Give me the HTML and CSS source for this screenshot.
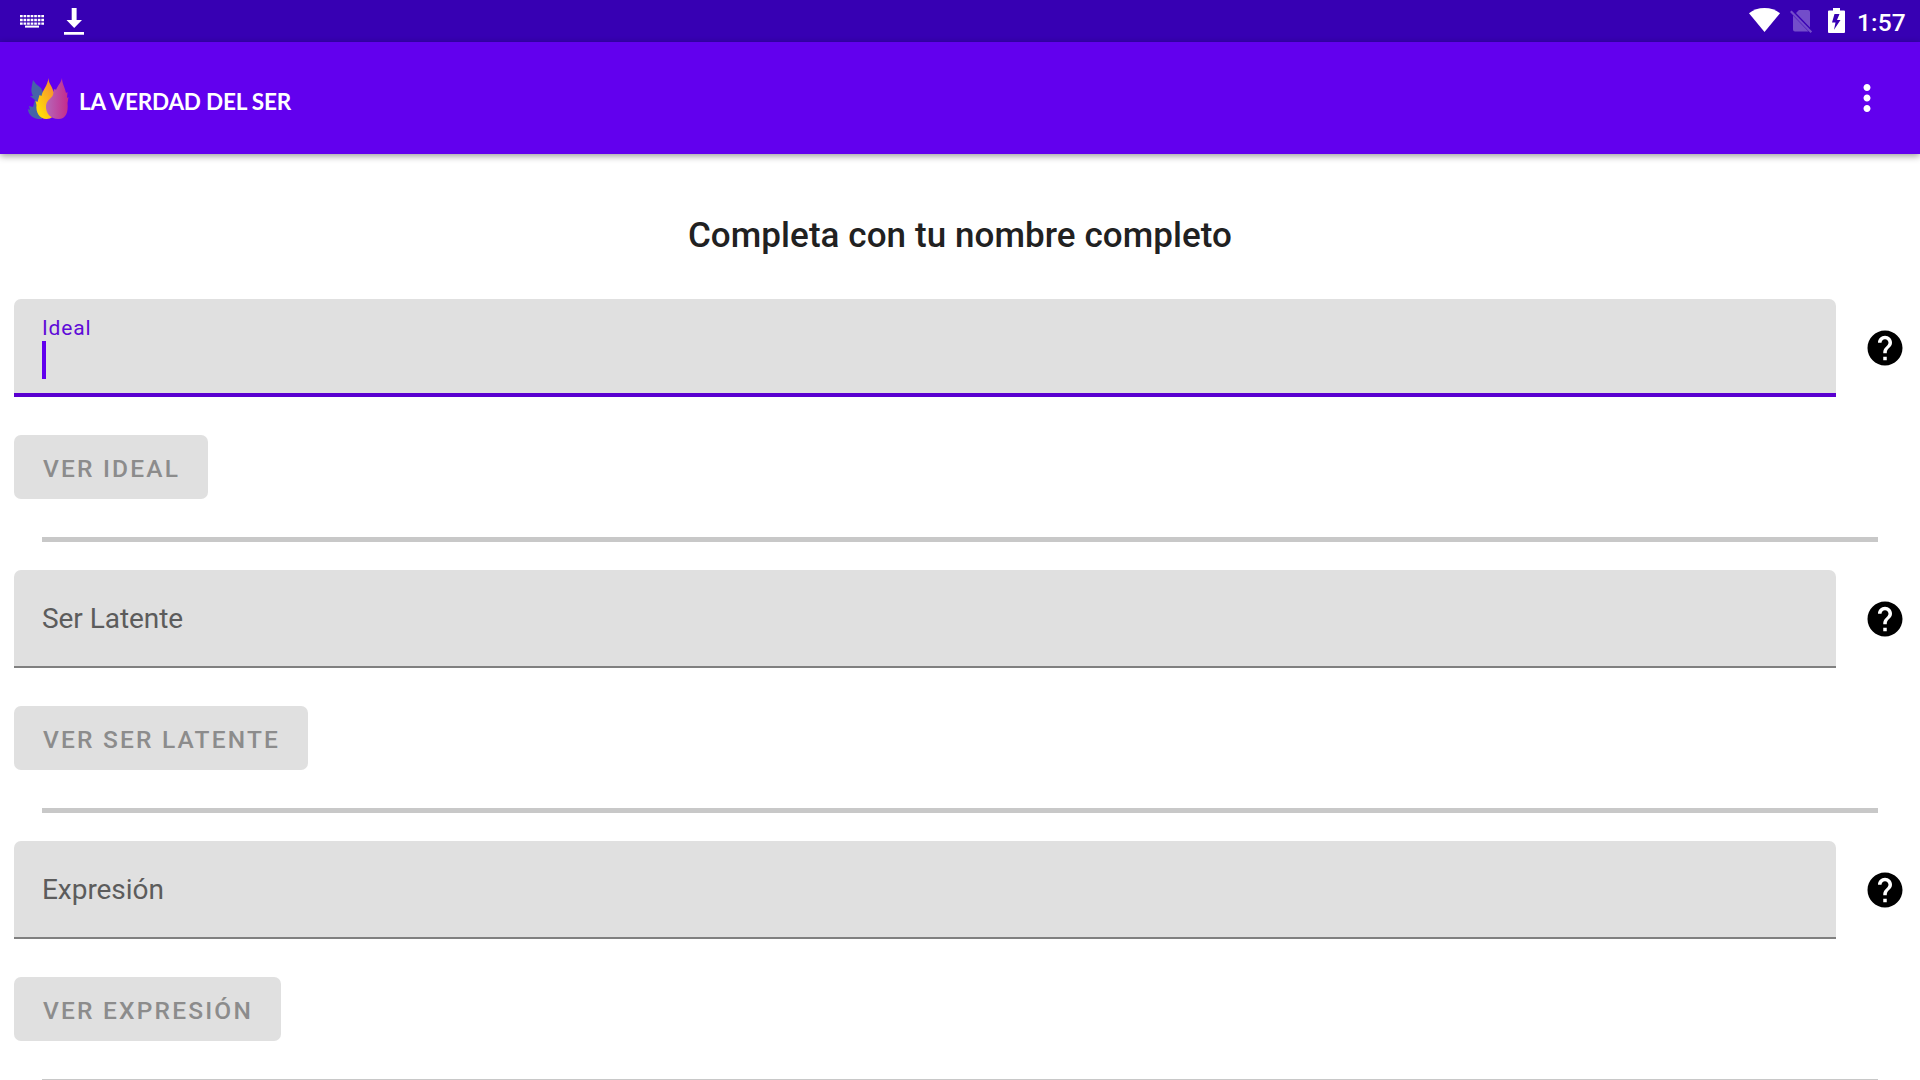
FILE: index.html
```html
<!DOCTYPE html>
<html lang="es">
<head>
  <meta charset="UTF-8">
  <meta name="viewport" content="width=device-width, initial-scale=1.0">
  <title>La Verdad del Ser</title>
  <link rel="stylesheet" href="styles.css">
</head>
<body>

  <!-- barra de estado -->
  <div class="status-bar">
    <div class="status-left">
      <svg class="icon-keyboard" width="24" height="13" viewBox="0 0 24 13">
        <path d="M0 1.2h24M0 5h24M0 8.6h24" stroke="#fff" stroke-width="2.3" stroke-dasharray="2.7 .85" fill="none"/>
        <path d="M5 11.6h14" stroke="#fff" stroke-width="2"/>
      </svg>
      <svg class="icon-download" width="20" height="27" viewBox="0 0 20 27">
        <path d="M7.7 0h4.9v12H18l-7.8 8L2.5 12h5.2zM0 24h20v2.7H0z" fill="#fff"/>
      </svg>
    </div>
    <div class="status-right">
      <svg class="icon-wifi" width="31" height="24" viewBox="0 0 31 24">
        <path d="M0 5.2C4.3 1.9 9.5 0 15.5 0S26.7 1.9 31 5.2L15.5 24z" fill="#fff"/>
      </svg>
      <svg class="icon-sim" width="23" height="24" viewBox="0 0 23 24">
        <path d="M9 1h9q2 0 2 2v15.500L6 4zM3 6.500L18.500 22.500H5q-2 0-2-2z" fill="#fff"/>
        <path d="M.8 2.200l20.500 21" stroke="#fff" stroke-width="2.200"/>
      </svg>
      <svg class="icon-battery" width="17" height="25" viewBox="0 0 17 25">
        <path fill-rule="evenodd" d="M5 0h7v2.500h4q1 0 1 1V24q0 1-1 1H1q-1 0-1-1V3.500q0-1 1-1h4zM6.500 6L4 14.500h3.500L6 21.700 12.500 12H9L11.500 6z" fill="#fff"/>
      </svg>
      <span class="clock">1:57</span>
    </div>
  </div>

  <header class="app-bar">
    <div class="brand">
      <svg class="logo" width="42" height="42" viewBox="0 0 42 42">
        <defs>
          <linearGradient id="fire" x1="0" y1="1" x2="1" y2="0">
            <stop offset="0.2" stop-color="#ffd90a"/>
            <stop offset="1" stop-color="#f47a3c"/>
          </linearGradient>
          <linearGradient id="rose" x1="0" y1="0" x2="1" y2="0">
            <stop offset="0" stop-color="#b568b8"/>
            <stop offset="1" stop-color="#c52a8c"/>
          </linearGradient>
        </defs>
        <path d="M6 2l3 4 5 4 2 4-1 27h-4C5 40 1 36 1 31l2 1-1-4 4 1 2-7-5-4h3C3 13 5 8 6 2z" fill="#4663a8"/>
        <path d="M21.500 0c0 6 4 8 5 14l2-3-1 7 2 4-1 9c-1 7-4 10-9 10-7 0-11-7-10-14l-1-4 2 1 2-7 2 1c1-6 6-10 7-18z" fill="url(#fire)"/>
        <path d="M35 0c0 6 3 9 4 15l1.500-1-.5 6 1.500-1-1 6c1 10-2 16-9 16-8 0-13-6-12.500-13 .5-6 5-7 7-11l1-6 2 1c2-5 5-7 6-12z" fill="url(#rose)"/>
      </svg>
      <span class="brand-name">LA VERDAD DEL SER</span>
    </div>
    <svg class="icon-more" width="42" height="42" viewBox="0 0 24 24">
      <path d="M12 8c1.100 0 2-.9 2-2s-.9-2-2-2-2 .9-2 2 .9 2 2 2zm0 2c-1.100 0-2 .9-2 2s.9 2 2 2 2-.9 2-2-.9-2-2-2zm0 6c-1.100 0-2 .9-2 2s.9 2 2 2 2-.9 2-2-.9-2-2-2z" fill="#fff"/>
    </svg>
  </header>

  <main>
    <h1>Completa con tu nombre completo</h1>

    <section class="group">
      <div class="row">
        <div class="field active">
          <label>Ideal</label>
          <div class="cursor"></div>
        </div>
        <svg class="icon-help" width="42" height="42" viewBox="0 0 24 24">
          <path d="M12 2C6.480 2 2 6.480 2 12s4.480 10 10 10 10-4.480 10-10S17.520 2 12 2zm1 17h-2v-2h2v2zm2.070-7.750l-.9.920C13.450 12.900 13 13.500 13 15h-2v-.5c0-1.100.450-2.100 1.170-2.830l1.240-1.260c.370-.360.590-.860.590-1.410 0-1.100-.9-2-2-2s-2 .9-2 2H8c0-2.210 1.790-4 4-4s4 1.790 4 4c0 .880-.360 1.680-.930 2.250z"/>
        </svg>
      </div>
      <button disabled>VER IDEAL</button>
      <hr>
    </section>

    <section class="group">
      <div class="row">
        <div class="field">
          <label>Ser Latente</label>
        </div>
        <svg class="icon-help" width="42" height="42" viewBox="0 0 24 24">
          <path d="M12 2C6.480 2 2 6.480 2 12s4.480 10 10 10 10-4.480 10-10S17.520 2 12 2zm1 17h-2v-2h2v2zm2.070-7.750l-.9.920C13.450 12.900 13 13.500 13 15h-2v-.5c0-1.100.450-2.100 1.170-2.830l1.240-1.260c.370-.360.590-.860.590-1.410 0-1.100-.9-2-2-2s-2 .9-2 2H8c0-2.210 1.790-4 4-4s4 1.790 4 4c0 .880-.360 1.680-.930 2.250z"/>
        </svg>
      </div>
      <button disabled>VER SER LATENTE</button>
      <hr>
    </section>

    <section class="group">
      <div class="row">
        <div class="field">
          <label>Expresión</label>
        </div>
        <svg class="icon-help" width="42" height="42" viewBox="0 0 24 24">
          <path d="M12 2C6.480 2 2 6.480 2 12s4.480 10 10 10 10-4.480 10-10S17.520 2 12 2zm1 17h-2v-2h2v2zm2.070-7.750l-.9.920C13.450 12.900 13 13.500 13 15h-2v-.5c0-1.100.450-2.100 1.170-2.830l1.240-1.260c.370-.360.590-.860.590-1.410 0-1.100-.9-2-2-2s-2 .9-2 2H8c0-2.210 1.790-4 4-4s4 1.790 4 4c0 .880-.360 1.680-.930 2.250z"/>
        </svg>
      </div>
      <button disabled>VER EXPRESIÓN</button>
      <hr>
    </section>
  </main>

</body>
</html>
```
FILE: styles.css
```css
* {
  box-sizing: border-box;
}

body {
  margin: 0;
  height: 100vh;
  overflow: hidden;
  background: #fff;
  font-family: Roboto, sans-serif;
}

svg {
  display: block;
  flex-shrink: 0;
}

/* barra de estado */
.status-bar {
  display: flex;
  justify-content: space-between;
  height: 42px;
  padding: 0 14px 0 20px;
  background: #3700b3;
}

.status-left,
.status-right {
  display: flex;
  align-items: flex-start;
}

.icon-keyboard {
  margin-top: 15px;
}

.icon-download {
  margin: 8px 0 0 20px;
}

.icon-wifi {
  margin: 8px 10px 0 0;
}

.icon-sim {
  margin: 9px 15px 0 0;
  opacity: 0.3;
}

.icon-battery {
  margin: 8px 12px 0 0;
}

.clock {
  color: #fff;
  font-size: 24.5px;
  font-weight: 500;
  line-height: 46px;
  letter-spacing: 0.2px;
}

/* toolbar */
.app-bar {
  display: flex;
  align-items: center;
  justify-content: space-between;
  height: 112px;
  padding: 0 32px 0 27px;
  background: #6200ee;
  box-shadow: 0 2px 7px rgba(0, 0, 0, 0.4);
}

.brand {
  display: flex;
  align-items: center;
  gap: 10px;
}

.logo {
  margin-top: 2px;
}

.brand-name {
  padding-top: 6px;
  color: #fff;
  font-family: Lato, sans-serif;
  font-size: 22.5px;
  font-weight: 700;
  letter-spacing: -0.2px;
}

main {
  padding: 0 14px;
}

h1 {
  margin: 0;
  padding-top: 61px;
  height: 145px;
  color: #212121;
  font-size: 35px;
  font-weight: 500;
  line-height: 41px;
  letter-spacing: 0.07px;
  text-align: center;
}

.group {
  height: 271px;
}

.row {
  display: flex;
  align-items: center;
  gap: 28px;
}

.field {
  display: flex;
  flex: 1;
  flex-direction: column;
  justify-content: center;
  height: 98px;
  padding: 2px 28px 0;
  background: #e0e0e0;
  border-bottom: 2px solid #808080;
  border-radius: 7px 7px 0 0;
}

.field label {
  color: #5c5c5c;
  font-size: 28px;
  line-height: 34px;
  letter-spacing: -0.05px;
}

.field.active {
  justify-content: flex-start;
  padding-top: 17px;
  border-bottom: 4px solid #5a00d0;
}

.field.active label {
  color: #5f0bd8;
  font-size: 21px;
  line-height: 25px;
  letter-spacing: 0.85px;
}

.cursor {
  width: 4px;
  height: 38px;
  background: #6200ee;
}

button {
  display: block;
  height: 64px;
  margin: 38px 0;
  padding: 2px 28px 0 29px;
  border: none;
  border-radius: 7px;
  background: #e0e0e0;
  color: #8c8c8c;
  font-family: Roboto, sans-serif;
  font-size: 24.5px;
  font-weight: 500;
  letter-spacing: 2.2px;
}

hr {
  height: 5px;
  margin: 0 28px;
  border: none;
  background: #c8c8c8;
}
```
